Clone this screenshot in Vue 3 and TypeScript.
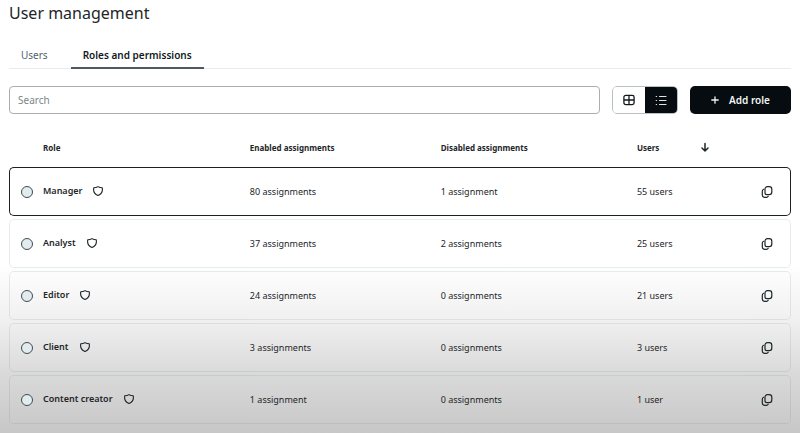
<script setup lang="ts">
import { ref } from 'vue'

interface Role {
  name: string
  enabled: number
  disabled: number
  users: number
}

const roles: Role[] = [
  { name: 'Manager', enabled: 80, disabled: 1, users: 55 },
  { name: 'Analyst', enabled: 37, disabled: 2, users: 25 },
  { name: 'Editor', enabled: 24, disabled: 0, users: 21 },
  { name: 'Client', enabled: 3, disabled: 0, users: 3 },
  { name: 'Content creator', enabled: 1, disabled: 0, users: 1 },
]

const search = ref('')
const selected = ref('')
const highlighted = ref('Manager')
const view = ref<'grid' | 'list'>('list')

function count(n: number, noun: string): string {
  return `${n} ${noun}${n === 1 ? '' : 's'}`
}
</script>

<template>
  <main class="page">
    <h1>User management</h1>

    <nav class="tabs">
      <a href="#users" class="tab">Users</a>
      <a href="#roles" class="tab active" aria-current="page">Roles and permissions</a>
    </nav>

    <div class="toolbar">
      <input v-model="search" class="search" type="search" placeholder="Search" aria-label="Search" />
      <div class="toggle">
        <button type="button" :class="{ on: view === 'grid' }" aria-label="Grid view" @click="view = 'grid'">
          <svg width="12" height="12" viewBox="0 0 12 12" fill="none" stroke="currentColor" stroke-width="1.3">
            <rect x="0.9" y="1.4" width="10.2" height="9.2" rx="1.8" />
            <path d="M6 1.4v9.2M0.9 6h10.2" />
          </svg>
        </button>
        <button type="button" :class="{ on: view === 'list' }" aria-label="List view" @click="view = 'list'">
          <svg width="12" height="12" viewBox="0 0 12 12" fill="none" stroke="currentColor" stroke-width="1.2" stroke-linecap="round">
            <path d="M4.5 2.5h6.5M4.5 6.5h6.5M4.5 10.5h6.5M1.2 2.5h0.4M1.2 6.5h0.4M1.2 10.500h0.4" />
          </svg>
        </button>
      </div>
      <button type="button" class="add">
        <svg width="8" height="8" viewBox="0 0 8 8" fill="none" stroke="currentColor" stroke-width="1.3" stroke-linecap="round">
          <path d="M4 0.8v6.4M0.8 4h6.4" />
        </svg>
        <span>Add role</span>
      </button>
    </div>

    <table>
      <colgroup>
        <col class="col-role" />
        <col class="col-enabled" />
        <col class="col-disabled" />
        <col class="col-users" />
        <col class="col-action" />
      </colgroup>
      <thead>
        <tr>
          <th scope="col" class="role-head">Role</th>
          <th scope="col">Enabled assignments</th>
          <th scope="col">Disabled assignments</th>
          <th scope="col">
            <span class="sort-head">
              Users
              <button type="button" class="plain" aria-label="Sort by users">
                <svg width="10" height="10" viewBox="0 0 10 10" fill="none" stroke="currentColor" stroke-width="1.5" stroke-linecap="round" stroke-linejoin="round">
                  <path d="M5 1.4v7.6M2 6L5 9l3-3" />
                </svg>
              </button>
            </span>
          </th>
          <td></td>
        </tr>
      </thead>
      <tbody>
        <tr v-for="role in roles" :key="role.name" :class="{ current: role.name === highlighted }">
          <td>
            <label class="role">
              <input v-model="selected" type="radio" name="role" :value="role.name" />
              <span class="title">
                <span>{{ role.name }}</span>
                <svg width="10" height="10" viewBox="0 0 10 10" fill="none" stroke="currentColor" stroke-width="1.1" stroke-linejoin="round">
                  <path d="M5 0.6C6.1 1.3 7.6 1.7 9.2 1.7C9.9 5.2 8.4 8.2 5 9.4C1.6 8.2 0.1 5.2 0.8 1.7C2.4 1.7 3.9 1.3 5 0.6Z" />
                </svg>
              </span>
            </label>
          </td>
          <td>{{ count(role.enabled, 'assignment') }}</td>
          <td>{{ count(role.disabled, 'assignment') }}</td>
          <td>{{ count(role.users, 'user') }}</td>
          <td class="action">
            <button type="button" class="plain" :aria-label="`Duplicate ${role.name}`">
              <svg width="12" height="12" viewBox="0 0 12 12" fill="none" stroke="currentColor" stroke-width="1.2" stroke-linecap="round" stroke-linejoin="round">
                <path d="M6.4 0.7h1.8a2.6 2.6 0 0 1 2.6 2.6v2.8a2.6 2.6 0 0 1-2.6 2.6H5.9A1.9 1.9 0 0 1 4 6.8V3.1A2.4 2.4 0 0 1 6.4 0.700Z" />
                <path d="M2.700 3.300A2 2 0 0 0 1.300 5.200v3.700A2.400 2.400 0 0 0 3.700 11.300h1.600A2 2 0 0 0 7.200 10.300" />
              </svg>
            </button>
          </td>
        </tr>
      </tbody>
    </table>
  </main>
</template>

<style>
body {
  background: #fff;
}
</style>

<style scoped>
.page {
  box-sizing: border-box;
  min-height: 100vh;
  padding: 2px 9px 6px;
  font-family: 'Noto Sans', 'Open Sans', sans-serif;
  font-size: 9px;
  color: #1d2629;
  background: linear-gradient(to bottom, #fff 61%, #f0f0f0 74%, #dadada 86%, #c7c7c7 100%);
}

h1 {
  margin: 0;
  font-size: 16px;
  line-height: 23px;
  font-weight: 400;
}

.tabs {
  display: flex;
  margin-top: 18px;
  border-bottom: 1px solid #e6ecef;
}

.tab {
  padding: 0 12px;
  margin-bottom: -1px;
  font-size: 10px;
  line-height: 24px;
  color: #52626c;
  text-decoration: none;
  border-bottom: 2px solid transparent;
}

.tab + .tab {
  margin-left: 11px;
}

.tab.active {
  font-weight: 600;
  color: #11191c;
  border-bottom-color: #4b5a5e;
}

.toolbar {
  display: flex;
  align-items: stretch;
  gap: 12px;
  height: 28px;
  margin-top: 17px;
}

.search {
  flex: 1;
  min-width: 0;
  padding: 0 8px;
  font: inherit;
  font-size: 10px;
  color: inherit;
  background: #fff;
  border: 1px solid #a9afb1;
  border-radius: 4px;
  appearance: none;
}

.search::placeholder {
  color: #7c868b;
  opacity: 1;
}

.toggle {
  display: flex;
  width: 66px;
  box-sizing: border-box;
  overflow: hidden;
  border: 1px solid #b9c0c2;
  border-radius: 5px;
}

.toggle button {
  flex: 1;
  display: grid;
  place-items: center;
  padding: 0;
  color: #11191c;
  background: #fff;
  border: 0;
}

.toggle button.on {
  color: #dfe5e7;
  background: #060c0f;
}

.add {
  display: flex;
  align-items: center;
  justify-content: center;
  gap: 10px;
  width: 101px;
  padding: 0;
  font: inherit;
  font-size: 10px;
  font-weight: 600;
  color: #f1f4f5;
  background: #060c0f;
  border: 0;
  border-radius: 5px;
}

table {
  width: 100%;
  margin-top: 17px;
  table-layout: fixed;
  border-collapse: separate;
  border-spacing: 0 3px;
}

.col-role {
  width: 30.8%;
}

.col-enabled {
  width: 24.4%;
}

.col-disabled {
  width: 25.1%;
}

.col-users {
  width: 14%;
}

th {
  height: 26px;
  padding: 0 0 4px;
  font-size: 8px;
  font-weight: 700;
  text-align: left;
}

.role-head {
  padding-left: 34px;
}

.sort-head {
  display: flex;
  align-items: center;
  gap: 41px;
}

.plain {
  display: inline-grid;
  padding: 0;
  color: inherit;
  background: none;
  border: 0;
}

tbody td {
  box-sizing: border-box;
  height: 49px;
  padding: 0;
  border: 0 solid rgba(70, 120, 130, 0.13);
  border-width: 1px 0;
}

tbody td:first-child {
  padding-left: 11px;
  border-left-width: 1px;
  border-radius: 5px 0 0 5px;
}

tbody td:last-child {
  padding-right: 17px;
  border-right-width: 1px;
  border-radius: 0 5px 5px 0;
}

tbody .current td {
  border-color: #1a2224;
}

.role {
  display: flex;
  align-items: center;
  gap: 10px;
}

.role input {
  appearance: none;
  box-sizing: border-box;
  width: 12px;
  height: 12px;
  margin: 0;
  background: #e4ebee;
  border: 1px solid #3e4c54;
  border-radius: 50%;
}

.role input:checked {
  background: #3e4c54;
}

.title {
  display: flex;
  align-items: center;
  gap: 11px;
  padding-bottom: 2px;
  font-weight: 600;
}

.action {
  text-align: right;
}

.action .plain {
  vertical-align: middle;
}
</style>
